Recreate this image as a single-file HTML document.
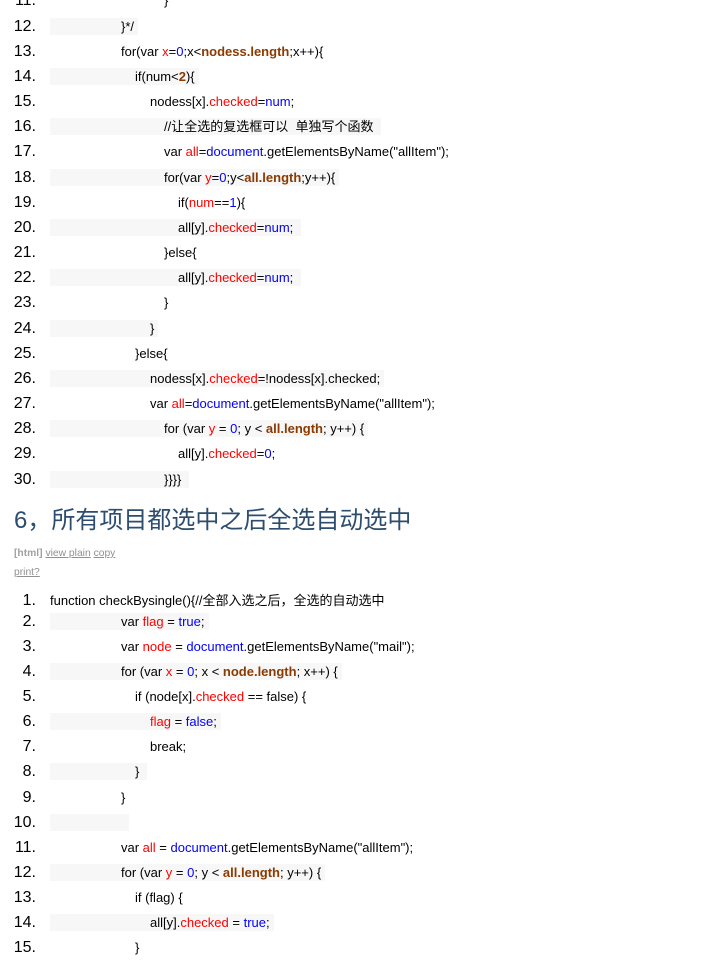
<!DOCTYPE html>
<html><head><meta charset="utf-8">
<style>
body{margin:0;width:716px;height:960px;overflow:hidden;background:#fff;position:relative;font-family:"Liberation Sans","Noto Sans CJK SC",sans-serif;}
.l{position:absolute;left:0;width:716px;height:25px;}
.n{position:absolute;right:680px;top:3px;font-size:16px;line-height:20px;color:#000;}
.c{position:absolute;left:50px;top:4px;height:17px;line-height:17px;font-size:13px;color:#000;white-space:pre;padding-right:4px;}
.e .c{background:#f7f7f7;}
.r{color:#f00}.b{color:#00f}.k{color:#8b3a00;font-weight:bold}
h2{position:absolute;left:14px;top:504px;margin:0;font-weight:normal;font-size:24px;line-height:34px;color:#2c4d6e;}
.tb{position:absolute;left:14px;font-size:10.3px;color:#a0a0a0;line-height:12px;}
.tb u{color:#909090}
</style></head><body>

<div class="l" style="top:-12px"><span class="n">11.</span><span class="c" style="padding-left:114px">}</span></div>
<div class="l e" style="top:13.5px"><span class="n">12.</span><span class="c" style="padding-left:71px">}*/</span></div>
<div class="l" style="top:38.7px"><span class="n">13.</span><span class="c" style="padding-left:71px">for(var <span class="r">x</span>=<span class="b">0</span>;x&lt;<span class="k">nodess.length</span>;x++){</span></div>
<div class="l e" style="top:63.8px"><span class="n">14.</span><span class="c" style="padding-left:85px">if(num&lt;<span class="k">2</span>){</span></div>
<div class="l" style="top:89px"><span class="n">15.</span><span class="c" style="padding-left:100px">nodess[x].<span class="r">checked</span>=<span class="b">num</span>;</span></div>
<div class="l e" style="top:114.2px"><span class="n">16.</span><span class="c" style="padding-left:114px">//让全选的复选框可以  单独写个函数 </span></div>
<div class="l" style="top:139.3px"><span class="n">17.</span><span class="c" style="padding-left:114px">var <span class="r">all</span>=<span class="b">document</span>.getElementsByName("allItem");</span></div>
<div class="l e" style="top:164.5px"><span class="n">18.</span><span class="c" style="padding-left:114px">for(var <span class="r">y</span>=<span class="b">0</span>;y&lt;<span class="k">all.length</span>;y++){</span></div>
<div class="l" style="top:189.7px"><span class="n">19.</span><span class="c" style="padding-left:128px">if(<span class="r">num</span>==<span class="b">1</span>){</span></div>
<div class="l e" style="top:214.9px"><span class="n">20.</span><span class="c" style="padding-left:128px">all[y].<span class="r">checked</span>=<span class="b">num</span>; </span></div>
<div class="l" style="top:240px"><span class="n">21.</span><span class="c" style="padding-left:114px">}else{</span></div>
<div class="l e" style="top:265.2px"><span class="n">22.</span><span class="c" style="padding-left:128px">all[y].<span class="r">checked</span>=<span class="b">num</span>; </span></div>
<div class="l" style="top:290.4px"><span class="n">23.</span><span class="c" style="padding-left:114px">}</span></div>
<div class="l e" style="top:315.6px"><span class="n">24.</span><span class="c" style="padding-left:100px">}</span></div>
<div class="l" style="top:340.7px"><span class="n">25.</span><span class="c" style="padding-left:85px">}else{</span></div>
<div class="l e" style="top:365.9px"><span class="n">26.</span><span class="c" style="padding-left:100px">nodess[x].<span class="r">checked</span>=!nodess[x].checked;</span></div>
<div class="l" style="top:391px"><span class="n">27.</span><span class="c" style="padding-left:100px">var <span class="r">all</span>=<span class="b">document</span>.getElementsByName("allItem");</span></div>
<div class="l e" style="top:416.2px"><span class="n">28.</span><span class="c" style="padding-left:114px">for (var <span class="r">y</span> = <span class="b">0</span>; y &lt; <span class="k">all.length</span>; y++) {</span></div>
<div class="l" style="top:441.4px"><span class="n">29.</span><span class="c" style="padding-left:128px">all[y].<span class="r">checked</span>=<span class="b">0</span>;</span></div>
<div class="l e" style="top:466.5px"><span class="n">30.</span><span class="c" style="padding-left:114px">}}}} </span></div>

<h2>6，所有项目都选中之后全选自动选中</h2>
<div class="tb" style="top:548px"><b>[html]</b> <u>view plain</u> <u>copy</u></div>
<div class="tb" style="top:567px"><u>print?</u></div>

<div class="l" style="top:587.5px"><span class="n">1.</span><span class="c">function checkBysingle(){//全部入选之后，全选的自动选中</span></div>
<div class="l e" style="top:608.5px"><span class="n">2.</span><span class="c" style="padding-left:71px">var <span class="r">flag</span> = <span class="b">true</span>;</span></div>
<div class="l" style="top:633.6px"><span class="n">3.</span><span class="c" style="padding-left:71px">var <span class="r">node</span> = <span class="b">document</span>.getElementsByName("mail");</span></div>
<div class="l e" style="top:658.8px"><span class="n">4.</span><span class="c" style="padding-left:71px">for (var <span class="r">x</span> = <span class="b">0</span>; x &lt; <span class="k">node.length</span>; x++) {</span></div>
<div class="l" style="top:683.9px"><span class="n">5.</span><span class="c" style="padding-left:85px">if (node[x].<span class="r">checked</span> == false) {</span></div>
<div class="l e" style="top:709px"><span class="n">6.</span><span class="c" style="padding-left:100px"><span class="r">flag</span> = <span class="b">false</span>;</span></div>
<div class="l" style="top:734.2px"><span class="n">7.</span><span class="c" style="padding-left:100px">break;</span></div>
<div class="l e" style="top:759.3px"><span class="n">8.</span><span class="c" style="padding-left:85px">} </span></div>
<div class="l" style="top:784.5px"><span class="n">9.</span><span class="c" style="padding-left:71px">}</span></div>
<div class="l e" style="top:809.6px"><span class="n">10.</span><span class="c" style="padding-left:75px"></span></div>
<div class="l" style="top:834.8px"><span class="n">11.</span><span class="c" style="padding-left:71px">var <span class="r">all</span> = <span class="b">document</span>.getElementsByName("allItem");</span></div>
<div class="l e" style="top:860px"><span class="n">12.</span><span class="c" style="padding-left:71px">for (var <span class="r">y</span> = <span class="b">0</span>; y &lt; <span class="k">all.length</span>; y++) {</span></div>
<div class="l" style="top:885.1px"><span class="n">13.</span><span class="c" style="padding-left:85px">if (flag) {</span></div>
<div class="l e" style="top:910.2px"><span class="n">14.</span><span class="c" style="padding-left:100px">all[y].<span class="r">checked</span> = <span class="b">true</span>;</span></div>
<div class="l" style="top:935.4px"><span class="n">15.</span><span class="c" style="padding-left:85px">}</span></div>

</body></html>
